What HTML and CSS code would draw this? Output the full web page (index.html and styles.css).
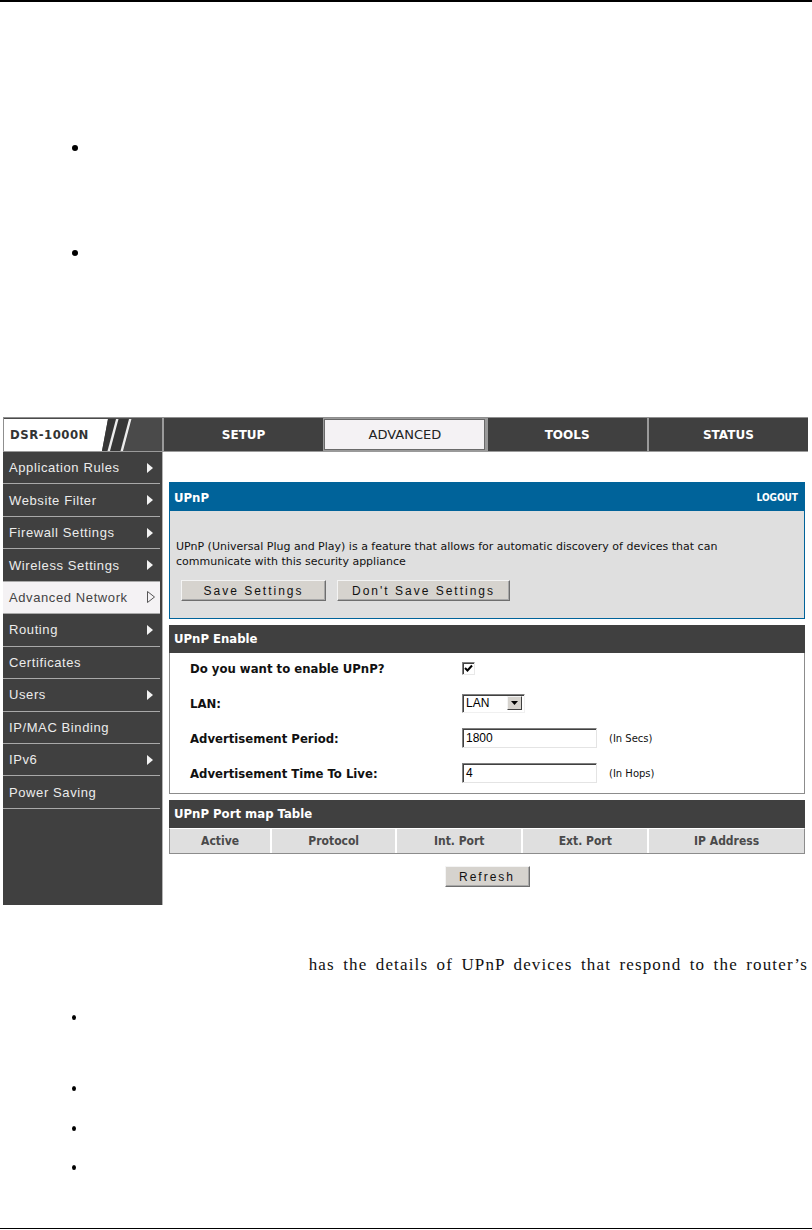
FILE: index.html
```html
<!DOCTYPE html>
<html>
<head>
<meta charset="utf-8">
<title>UPnP</title>
<link rel="stylesheet" href="styles.css">
</head>
<body>
<div class="page">
  <div class="rule-top"></div>
  <ul class="bullets bullets-top">
    <li class="bt1"></li>
    <li class="bt2"></li>
  </ul>

  <div class="shot">
    <div class="topbar">
      <div class="logo">
        <span class="model">DSR-1000N</span>
        <svg class="slashes" width="34" height="32" viewBox="0 0 34 32">
          <polygon points="0,0 7,0 1,32 0,32" fill="#ffffff"/>
          <polygon points="7,0 31,0 22,32 1,32" fill="#363636"/>
          <polygon points="15,0 17.5,0 9,32 6.5,32" fill="#ececec"/>
          <polygon points="28,0 30.5,0 22,32 19.5,32" fill="#ececec"/>
        </svg>
      </div>
      <div class="tab">SETUP</div>
      <div class="tab tab-active"><span>ADVANCED</span></div>
      <div class="tab">TOOLS</div>
      <div class="tab">STATUS</div>
    </div>

    <div class="main">
      <nav class="side">
        <div class="item"><span>Application Rules</span><svg class="arr" width="6" height="10" viewBox="0 0 6 10"><polygon points="0,0 6,5 0,10" fill="#f2f2f2"/></svg></div>
        <div class="item"><span>Website Filter</span><svg class="arr" width="6" height="10" viewBox="0 0 6 10"><polygon points="0,0 6,5 0,10" fill="#f2f2f2"/></svg></div>
        <div class="item"><span>Firewall Settings</span><svg class="arr" width="6" height="10" viewBox="0 0 6 10"><polygon points="0,0 6,5 0,10" fill="#f2f2f2"/></svg></div>
        <div class="item"><span>Wireless Settings</span><svg class="arr" width="6" height="10" viewBox="0 0 6 10"><polygon points="0,0 6,5 0,10" fill="#f2f2f2"/></svg></div>
        <div class="item item-active"><span>Advanced Network</span><svg class="arr" width="8" height="12" viewBox="0 0 8 12"><polygon points="0.5,0.5 7.5,6 0.5,11.5" fill="none" stroke="#555" stroke-width="1"/></svg></div>
        <div class="item"><span>Routing</span><svg class="arr" width="6" height="10" viewBox="0 0 6 10"><polygon points="0,0 6,5 0,10" fill="#f2f2f2"/></svg></div>
        <div class="item"><span>Certificates</span></div>
        <div class="item"><span>Users</span><svg class="arr" width="6" height="10" viewBox="0 0 6 10"><polygon points="0,0 6,5 0,10" fill="#f2f2f2"/></svg></div>
        <div class="item"><span>IP/MAC Binding</span></div>
        <div class="item"><span>IPv6</span><svg class="arr" width="6" height="10" viewBox="0 0 6 10"><polygon points="0,0 6,5 0,10" fill="#f2f2f2"/></svg></div>
        <div class="item"><span>Power Saving</span></div>
      </nav>

      <div class="content">
        <section class="panel">
          <div class="panel-head"><span>UPnP</span><span class="logout">LOGOUT</span></div>
          <div class="panel-body">
            <p class="desc">UPnP (Universal Plug and Play) is a feature that allows for automatic discovery of devices that can<br>communicate with this security appliance</p>
            <div class="btns">
              <button class="btn btn-save">Save Settings</button>
              <button class="btn btn-dont">Don't Save Settings</button>
            </div>
          </div>
        </section>

        <section class="box">
          <div class="box-head">UPnP Enable</div>
          <div class="form">
            <div class="row">
              <span class="lbl">Do you want to enable UPnP?</span>
              <span class="check"><svg width="9" height="9" viewBox="0 0 9 9"><path d="M1 4 L3.5 6.5 L8 1.5" fill="none" stroke="#000" stroke-width="2"/></svg></span>
            </div>
            <div class="row">
              <span class="lbl">LAN:</span>
              <span class="select"><span class="sel-val">LAN</span><span class="sel-btn"><svg width="7" height="4" viewBox="0 0 7 4"><polygon points="0,0 7,0 3.5,4" fill="#000"/></svg></span></span>
            </div>
            <div class="row">
              <span class="lbl">Advertisement Period:</span>
              <span class="field">1800</span>
              <span class="unit">(In Secs)</span>
            </div>
            <div class="row">
              <span class="lbl">Advertisement Time To Live:</span>
              <span class="field">4</span>
              <span class="unit">(In Hops)</span>
            </div>
          </div>
        </section>

        <section class="box">
          <div class="box-head">UPnP Port map Table</div>
          <div class="cols">
            <div class="col">Active</div>
            <div class="col">Protocol</div>
            <div class="col">Int. Port</div>
            <div class="col">Ext. Port</div>
            <div class="col">IP Address</div>
          </div>
        </section>

        <div class="refresh-row"><button class="btn btn-refresh">Refresh</button></div>
      </div>
    </div>
  </div>

  <p class="para">has the details of UPnP devices that respond to the router’s</p>

  <ul class="bullets bullets-bottom">
    <li class="bb1"></li>
    <li class="bb2"></li>
    <li class="bb3"></li>
    <li class="bb4"></li>
  </ul>
  <div class="rule-bottom"></div>
</div>
</body>
</html>
```

FILE: styles.css
```css
html, body {
  margin: 0;
  padding: 0;
  background: #ffffff;
}

.page {
  width: 812px;
  height: 1230px;
  display: flex;
  flex-direction: column;
  font-family: "Liberation Serif", serif;
  color: #000;
}

.rule-top {
  height: 2px;
  background: #000;
}

.rule-bottom {
  height: 1px;
  background: #000;
  margin-top: auto;
  margin-bottom: 1px;
}

.bullets {
  list-style: none;
  margin: 0;
  padding: 0 0 0 72px;
  display: flex;
  flex-direction: column;
}

.bullets li {
  border-radius: 50%;
  background: #000;
}

.bullets-top li {
  width: 6px;
  height: 6px;
}

.bullets-top .bt1 { margin-top: 143px; }
.bullets-top .bt2 { margin-top: 99px; }

.bullets-bottom li {
  width: 4px;
  height: 5px;
}

.bullets-bottom .bb1 { margin-top: 40px; }
.bullets-bottom .bb2 { margin-top: 66px; }
.bullets-bottom .bb3 { margin-top: 35px; }
.bullets-bottom .bb4 { margin-top: 34px; }

/* ---------- screenshot ---------- */

.shot {
  margin: 161px 0 0 3px;
  width: 805px;
  height: 488px;
  display: flex;
  flex-direction: column;
  font-family: "DejaVu Sans Condensed", "DejaVu Sans", sans-serif;
}

.topbar {
  height: 35px;
  display: flex;
  background: #404040;
  border-top: 1px solid #8f8f8f;
  border-bottom: 1px solid #9a9a9a;
  box-sizing: border-box;
}

.logo {
  width: 159px;
  display: flex;
  align-items: center;
  border-left: 1px solid #8f8f8f;
  background: #4a4a4a;
  box-sizing: border-box;
}

.model {
  height: 32px;
  width: 97px;
  background: #ffffff;
  color: #333;
  font-family: "DejaVu Sans Condensed", sans-serif;
  font-size: 13px;
  font-weight: bold;
  line-height: 32px;
  padding-left: 6px;
  box-sizing: border-box;
  letter-spacing: 0.5px;
}

.slashes {
  display: block;
}

.tab {
  flex: 1;
  display: flex;
  align-items: center;
  justify-content: center;
  border-left: 2px solid #9a9a9a;
  color: #ffffff;
  font-family: "DejaVu Sans", sans-serif;
  font-size: 12px;
  font-weight: bold;
}

.tab-active {
  background: #f4f2f4;
  color: #222;
  font-size: 13px;
  font-weight: normal;
  border: 1px solid #9a9a9a;
  border-left: 2px solid #9a9a9a;
  outline: 1px solid #6a6a6a;
  outline-offset: -2px;
}

.main {
  flex: 1;
  display: flex;
}

.side {
  width: 160px;
  background: #404040;
  padding-right: 2px;
  border-right: 1px solid #b4b4b4;
  box-sizing: border-box;
  display: flex;
  flex-direction: column;
}

.item {
  height: 32.45px;
  flex-shrink: 0;
  box-sizing: border-box;
  border-bottom: 1px solid #a9a9a9;
  display: flex;
  align-items: center;
  justify-content: space-between;
  padding: 0 7px 0 6px;
  color: #ececec;
  font-family: "Liberation Sans", Arial, sans-serif;
  font-size: 13px;
  letter-spacing: 0.6px;
}

.item-active {
  background: #f4f2f4;
  color: #444;
  padding-right: 5px;
}

.arr {
  display: block;
}

.content {
  flex: 1;
  background: #ffffff;
  padding: 30px 3px 0 6px;
  display: flex;
  flex-direction: column;
}

.panel {
  border: 1px solid #00639a;
}

.panel-head {
  height: 28px;
  background: #00639a;
  color: #ffffff;
  font-size: 13px;
  font-weight: bold;
  display: flex;
  align-items: center;
  justify-content: space-between;
  padding: 0 6px 0 4px;
}

.logout {
  font-size: 10px;
}

.panel-body {
  height: 107px;
  background: #dfdfdf;
  box-sizing: border-box;
  padding: 28px 0 0 6px;
}

.desc {
  margin: 0;
  font-family: "DejaVu Sans", sans-serif;
  font-size: 11px;
  line-height: 15px;
  color: #111;
}

.btns {
  display: flex;
  gap: 11px;
  margin: 11px 0 0 5px;
}

.btn {
  height: 21px;
  background: #d6d3ce;
  border: 1px solid;
  border-color: #f4f4f4 #6e6e6e #6e6e6e #f4f4f4;
  box-shadow: inset -1px -1px 0 #a8a8a8;
  font-family: "Liberation Sans", Arial, sans-serif;
  font-size: 12px;
  letter-spacing: 2px;
  color: #111;
  padding: 0;
  margin: 0;
}

.btn-save { width: 145px; }
.btn-dont { width: 173px; }
.btn-refresh { width: 85px; }

.box {
  margin-top: 6px;
}

.box-head {
  height: 28px;
  background: #404040;
  color: #ffffff;
  font-size: 13px;
  font-weight: bold;
  line-height: 28px;
  padding-left: 5px;
}

.form {
  border: 1px solid #8c8c8c;
  border-top: none;
  display: flex;
  flex-direction: column;
}

.row {
  height: 35px;
  box-sizing: border-box;
  padding: 0 0 5px 20px;
  display: flex;
  align-items: center;
}

.lbl {
  width: 272px;
  font-size: 13px;
  font-weight: bold;
  color: #111;
}

.check {
  width: 13px;
  height: 13px;
  box-sizing: border-box;
  border: 1px solid;
  border-color: #808080 #e8e8e8 #e8e8e8 #808080;
  background: #fff;
  box-shadow: inset 1px 1px 0 #404040;
  display: flex;
  align-items: center;
  justify-content: center;
}

.check svg {
  display: block;
}

.select {
  width: 63px;
  height: 19px;
  box-sizing: border-box;
  border: 1px solid;
  border-color: #808080 #f0f0f0 #f0f0f0 #808080;
  box-shadow: inset 1px 1px 0 #404040;
  background: #fff;
  display: flex;
  align-items: center;
  justify-content: space-between;
  padding: 1px 2px 1px 3px;
}

.sel-val {
  font-family: "Liberation Sans", Arial, sans-serif;
  font-size: 12px;
  color: #000;
}

.sel-btn {
  width: 15px;
  height: 14px;
  box-sizing: border-box;
  background: #d6d3ce;
  border: 1px solid;
  border-color: #f4f4f4 #404040 #404040 #f4f4f4;
  display: flex;
  align-items: center;
  justify-content: center;
}

.sel-btn svg {
  display: block;
}

.field {
  width: 135px;
  height: 20px;
  box-sizing: border-box;
  border: 1px solid;
  border-color: #808080 #e4e4e4 #e4e4e4 #808080;
  box-shadow: inset 1px 1px 0 #404040;
  background: #fff;
  font-family: "Liberation Sans", Arial, sans-serif;
  font-size: 12px;
  line-height: 18px;
  padding-left: 3px;
  color: #000;
}

.unit {
  margin-left: 12px;
  font-family: "DejaVu Sans", sans-serif;
  font-size: 10px;
  color: #111;
}

.cols {
  display: grid;
  grid-template-columns: 101fr 124fr 125fr 125fr 156fr;
  gap: 2px;
  background: #ffffff;
  border: 1px solid #8c8c8c;
  border-top: 1px solid #ffffff;
  height: 26px;
  box-sizing: border-box;
}

.col {
  background: #dfdfdf;
  color: #4a4a4a;
  font-size: 12px;
  font-weight: bold;
  display: flex;
  align-items: center;
  justify-content: center;
}

.refresh-row {
  display: flex;
  justify-content: center;
  margin-top: 12px;
}

/* ---------- document text ---------- */

.para {
  margin: 50px 0 0 0;
  padding-right: 4px;
  height: 20px;
  line-height: 20px;
  text-align: right;
  font-family: "Liberation Serif", "Times New Roman", serif;
  font-size: 17px;
  letter-spacing: 1.15px;
  word-spacing: 3px;
  color: #111;
}
```
